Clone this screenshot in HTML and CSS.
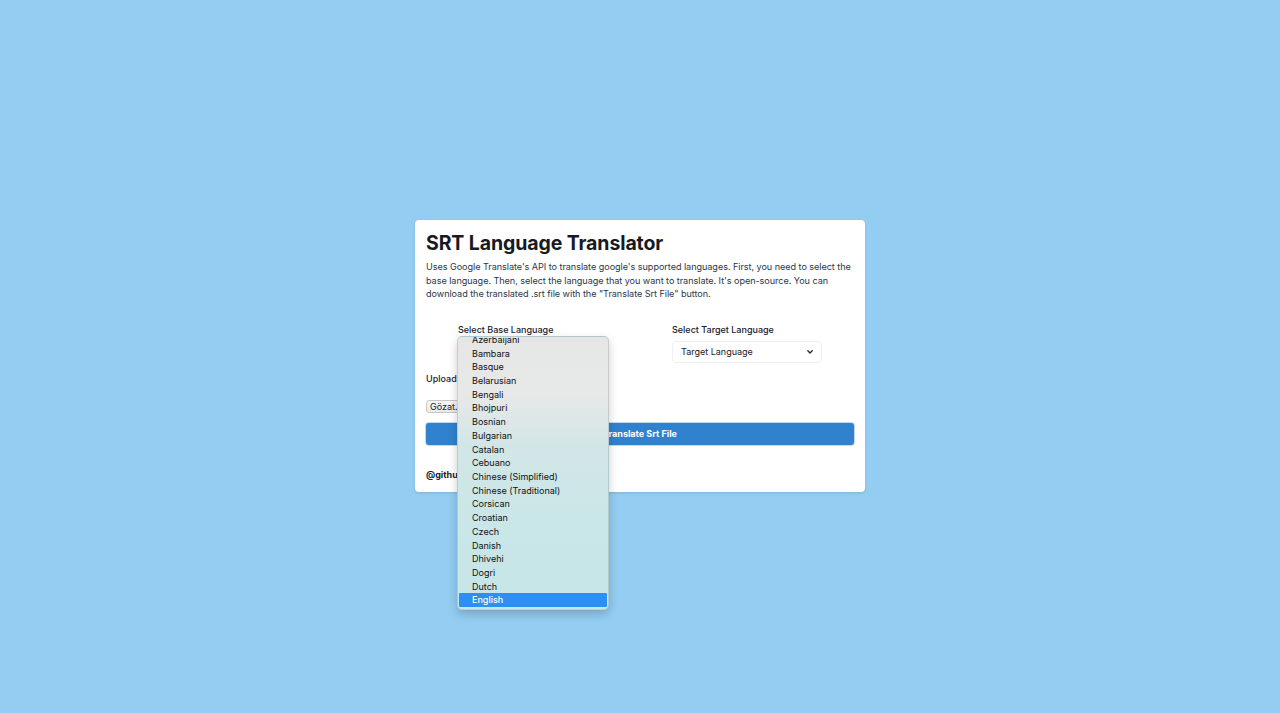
FILE: index.html
```html
<!DOCTYPE html>
<html lang="en">
<head>
<meta charset="utf-8">
<title>SRT Language Translator</title>
<link rel="stylesheet" href="styles.css">
</head>
<body>
<div class="page">
  <div class="card">
    <h1 class="title">SRT Language Translator</h1>
    <p class="desc">Uses Google Translate's API to translate google's supported languages. First, you need to select the base language. Then, select the language that you want to translate. It's open-source. You can download the translated .srt file with the "Translate Srt File" button.</p>
    <div class="langs">
      <div class="col">
        <div class="field">
          <div class="label">Select Base Language</div>
          <div class="select base">
            <span>English</span>
            <svg class="chev" width="8" height="6" viewBox="0 0 8 6"><path d="M1.8 1.8 L4 4 L6.2 1.8" fill="none" stroke="#222" stroke-width="1.3" stroke-linecap="round" stroke-linejoin="round"/></svg>
          </div>
          <div class="popup">
            <ul class="options">
              <li>Azerbaijani</li>
              <li>Bambara</li>
              <li>Basque</li>
              <li>Belarusian</li>
              <li>Bengali</li>
              <li>Bhojpuri</li>
              <li>Bosnian</li>
              <li>Bulgarian</li>
              <li>Catalan</li>
              <li>Cebuano</li>
              <li>Chinese (Simplified)</li>
              <li>Chinese (Traditional)</li>
              <li>Corsican</li>
              <li>Croatian</li>
              <li>Czech</li>
              <li>Danish</li>
              <li>Dhivehi</li>
              <li>Dogri</li>
              <li>Dutch</li>
              <li class="sel">English</li>
            </ul>
          </div>
        </div>
      </div>
      <div class="col">
        <div class="field">
          <div class="label">Select Target Language</div>
          <div class="select">
            <span>Target Language</span>
            <svg class="chev" width="8" height="6" viewBox="0 0 8 6"><path d="M1.8 1.8 L4 4 L6.2 1.8" fill="none" stroke="#222" stroke-width="1.3" stroke-linecap="round" stroke-linejoin="round"/></svg>
          </div>
        </div>
      </div>
    </div>
    <div class="upload-label">Upload Srt File</div>
    <div class="file-row">
      <span class="file-btn">Gözat...</span>
      <span class="file-name">Dosya seçilmedi.</span>
    </div>
    <button class="translate">Translate Srt File</button>
    <div class="github">@github/srt-language-translator</div>
  </div>
</div>
</body>
</html>
```
FILE: styles.css
```css
html, body {
  margin: 0;
  padding: 0;
}
body {
  background: #93cdf2;
  font-family: Inter, "Liberation Sans", Arial, sans-serif;
  color: #1a202c;
}
.page {
  height: 713px;
  display: flex;
  justify-content: center;
  align-items: flex-start;
  padding-top: 220px;
  box-sizing: border-box;
}
.card {
  width: 450px;
  box-sizing: border-box;
  background: #fff;
  border-radius: 4px;
  box-shadow: 0 1px 3px rgba(0,0,0,0.12);
  padding: 11px 11px 11px 11px;
}
.title {
  margin: 0;
  font-size: 19.5px;
  line-height: 24px;
  font-weight: 700;
  color: #171923;
  letter-spacing: -0.1px;
}
.desc {
  margin: 5px 0 0 0;
  font-size: 9.1px;
  line-height: 13.6px;
  letter-spacing: -0.05px;
  color: #2d3748;
}
.langs {
  display: grid;
  grid-template-columns: 1fr 1fr;
  margin-top: 23px;
}
.col {
  display: flex;
  justify-content: center;
}
.field {
  width: 150px;
  position: relative;
}
.label {
  font-size: 9px;
  line-height: 12px;
  font-weight: 500;
  color: #1a202c;
}
.select {
  margin-top: 5px;
  height: 22px;
  box-sizing: border-box;
  border: 1px solid #edf0f3;
  border-radius: 4px;
  background: #fff;
  display: flex;
  align-items: center;
  justify-content: space-between;
  padding: 0 7px 0 8px;
  font-size: 9px;
  color: #1a202c;
}
.chev {
  display: block;
}
.popup {
  position: absolute;
  left: -1px;
  top: 12px;
  width: 152px;
  height: 274px;
  box-sizing: border-box;
  border-radius: 5px;
  border: 1px solid rgba(0,0,0,0.12);
  background: linear-gradient(to bottom, #e6e6e6 0%, #e7e8e8 22%, #d2e6e7 40%, #c9e6e8 70%, #c6e6e8 100%);
  box-shadow: 0 4px 10px rgba(0,0,0,0.2);
  overflow: hidden;
  z-index: 10;
  padding: 0 1px 3px 1px;
}
.options {
  list-style: none;
  margin: -4px 0 0 0;
  padding: 0;
}
.options li {
  height: 13.72px;
  line-height: 13.72px;
  padding-left: 13px;
  font-size: 9px;
  color: #111;
  border-radius: 1px;
}
.options li.sel {
  background: #2b8ff3;
  color: #fff;
  font-weight: 500;
}
.upload-label {
  margin-top: 10px;
  font-size: 9px;
  line-height: 12px;
  font-weight: 500;
}
.file-row {
  margin-top: 15px;
  display: flex;
  align-items: center;
  gap: 4px;
  height: 13px;
}
.file-btn {
  font-size: 9px;
  line-height: 11px;
  padding: 0 3px;
  border: 1px solid #c8c8c8;
  border-radius: 3px;
  background: linear-gradient(#f6f6f6, #e9e9e9);
  color: #222;
}
.file-name {
  font-size: 9px;
  color: #222;
}
.translate {
  display: block;
  width: 100%;
  margin-top: 10px;
  height: 22px;
  border: none;
  border-radius: 3px;
  background: #3182ce;
  color: #fff;
  font-family: inherit;
  font-size: 9px;
  font-weight: 700;
  box-shadow: 0 0 0 1px rgba(49,130,206,0.3);
}
.github {
  margin-top: 24px;
  font-size: 9px;
  line-height: 12px;
  font-weight: 700;
  color: #1a202c;
}
```
